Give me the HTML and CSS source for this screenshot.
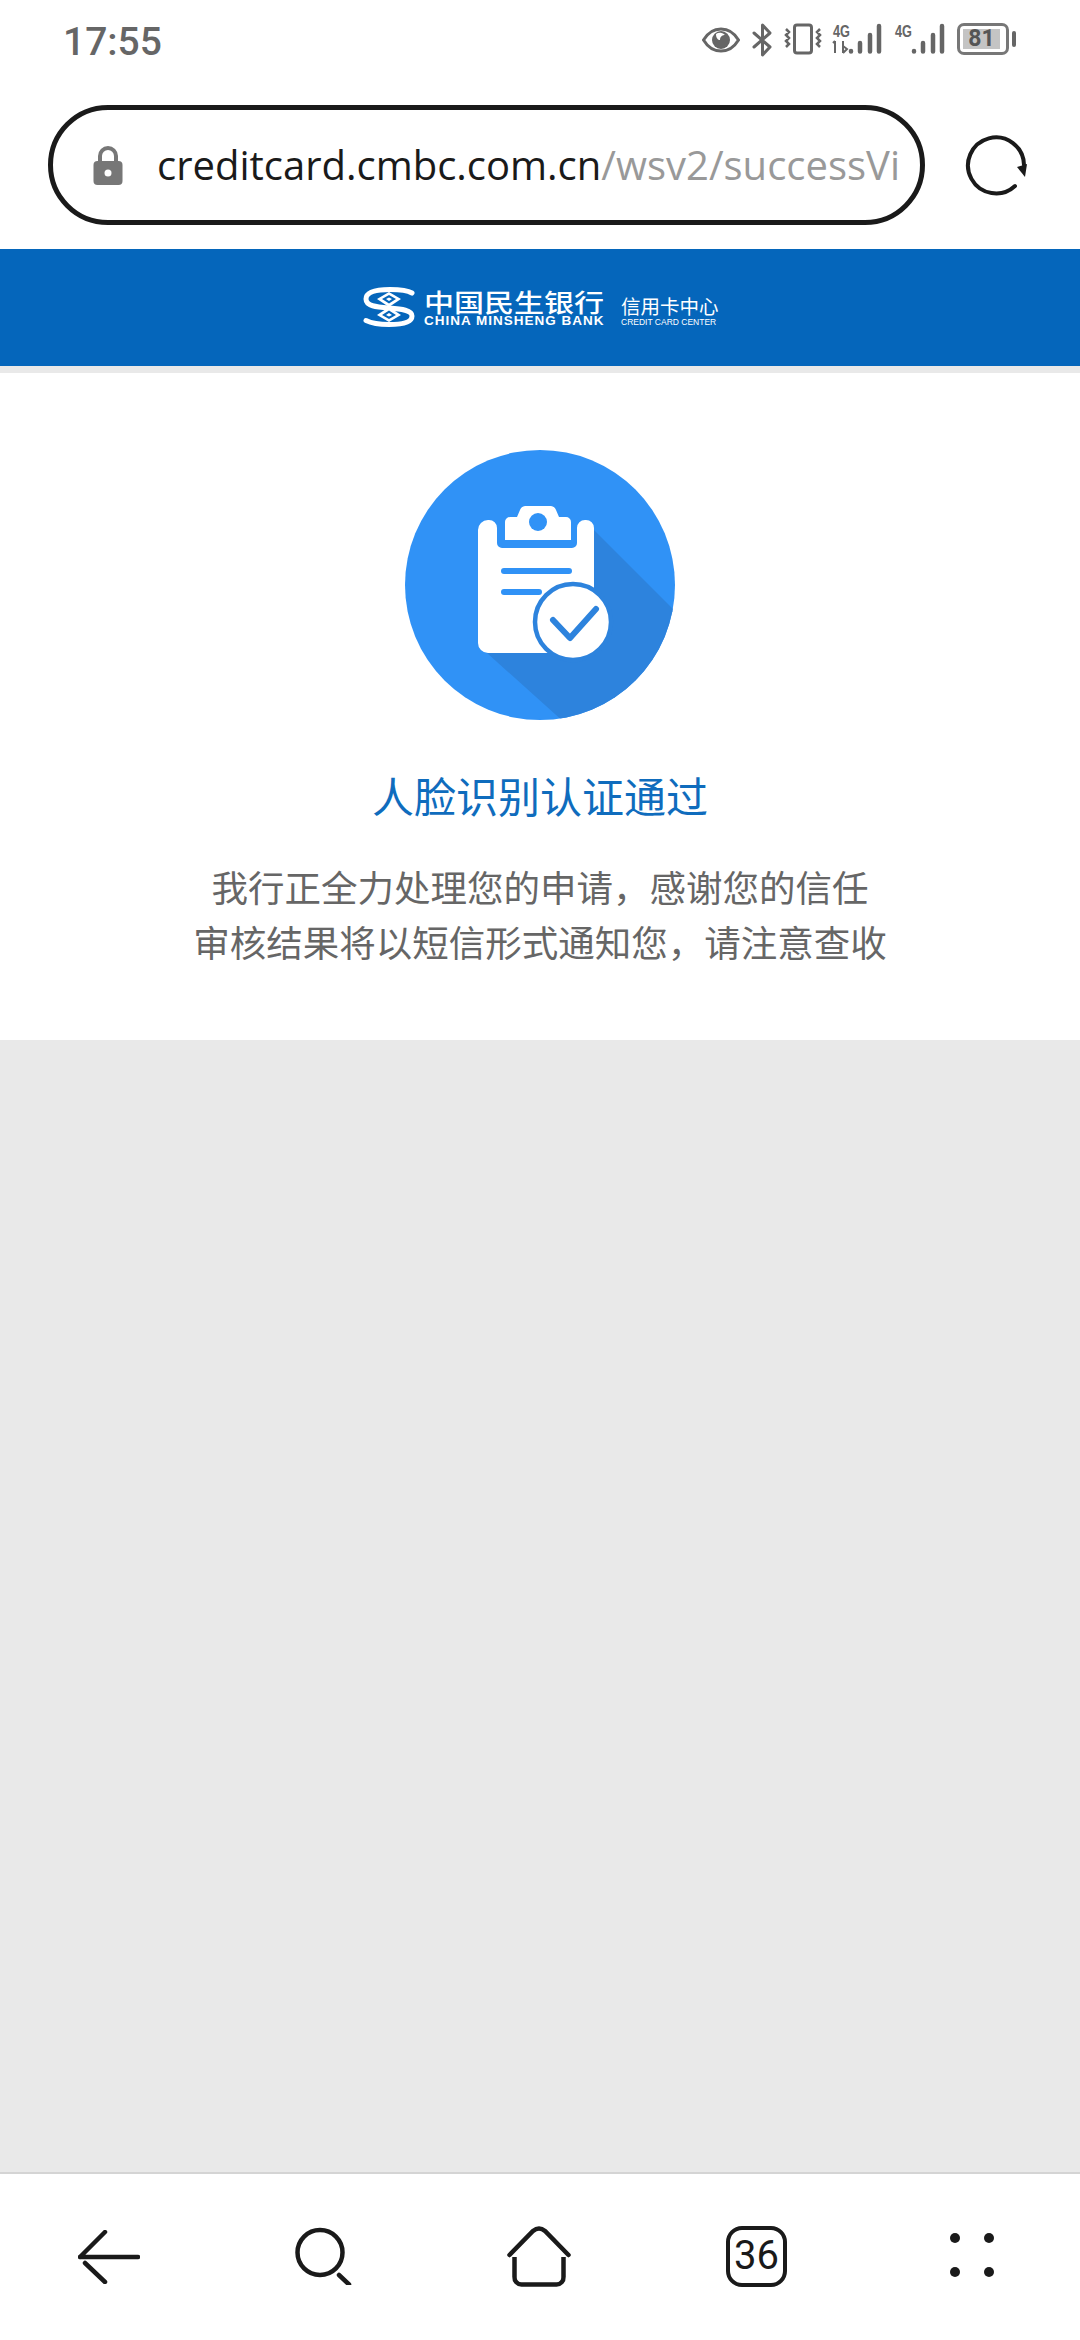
FILE: index.html
```html
<!DOCTYPE html>
<html lang="zh-CN">
  <head>
    <meta charset="UTF-8" />
    <meta name="viewport" content="width=device-width, initial-scale=1.0" />
    <title>人脸识别认证通过</title>
    <link rel="stylesheet" href="styles.css">
  </head>
  <body>
    <div class="phone">
      <div class="statusbar">
        <span class="time">17:55</span>
        <div class="status-icons">
          <!-- eye -->
          <svg class="ic-eye" width="38" height="26" viewBox="0 0 38 26">
            <path d="M1.5 13C6 5.5 12 2 19 2s13 3.5 17.5 11C32 20.5 26 24 19 24S6 20.5 1.5 13z" fill="none" stroke="#666" stroke-width="3"/>
            <circle cx="19" cy="13" r="9" fill="#666"/>
            <path d="M14 7a7 7 0 0 1 9 1c-2 0-5 1-5 5-2 0-4-2-4-6z" fill="#fff"/>
          </svg>
          <!-- bluetooth -->
          <svg class="ic-bt" width="20" height="34" viewBox="0 0 20 34">
            <path d="M2 10l16 14-7.5 8V2L18 10 2 24" fill="none" stroke="#666" stroke-width="3" stroke-linejoin="round" stroke-linecap="round"/>
          </svg>
          <!-- vibrate -->
          <svg class="ic-vib" width="38" height="32" viewBox="0 0 38 32">
            <rect x="10.5" y="2" width="17" height="28" rx="2.5" fill="none" stroke="#666" stroke-width="3"/>
            <path d="M2 6l3 3-3 3 3 3-3 3 3 3-3 3M36 6l-3 3 3 3-3 3 3 3-3 3 3 3" fill="none" stroke="#666" stroke-width="2.5"/>
          </svg>
          <!-- sim 1 -->
          <svg class="ic-sig1" width="50" height="32" viewBox="0 0 50 32">
            <text class="sig-text" x="1" y="14" textLength="17" lengthAdjust="spacingAndGlyphs">4G</text>
            <path d="M3 18v12M1 20l2-2M11 18v12M11 30l4-4-4-3" fill="none" stroke="#666" stroke-width="2"/>
            <path d="M19 28v.5M28 20v8.5M38 12v16.5M47 3v25.5" fill="none" stroke="#666" stroke-width="4.5" stroke-linecap="round"/>
          </svg>
          <!-- sim 2 -->
          <svg class="ic-sig2" width="51" height="32" viewBox="0 0 51 32">
            <text class="sig-text" x="1" y="14" textLength="17" lengthAdjust="spacingAndGlyphs">4G</text>
            <path d="M20 28v.5M29 20v8.5M39 12v16.5M48 3v25.5" fill="none" stroke="#666" stroke-width="4.5" stroke-linecap="round"/>
          </svg>
          <div class="battery">
            <div class="battery-body"><span class="battery-level">81</span></div>
            <div class="battery-nub"></div>
          </div>
        </div>
      </div>

      <div class="addressbar">
        <div class="urlbox">
          <svg class="lock" width="30" height="40" viewBox="0 0 30 40">
            <path d="M7 18v-8a8 8 0 0 1 16 0v8" fill="none" stroke="#777" stroke-width="4"/>
            <rect x="0.5" y="15" width="29" height="24" rx="4" fill="#777"/>
            <circle cx="15" cy="27" r="3.5" fill="#fff"/>
          </svg>
          <div class="url"><span class="url-host">creditcard.cmbc.com.cn</span><span class="url-path">/wsv2/successVi</span></div>
        </div>
        <svg class="reload" width="64" height="64" viewBox="0 0 64 64">
          <path d="M51 53A28 28 0 1 1 60 32" fill="none" stroke="#1a1a1a" stroke-width="4" stroke-linecap="round"/>
          <path d="M53 34l10-3-2 13z" fill="#1a1a1a"/>
        </svg>
      </div>

      <div class="bank-header">
        <svg class="bank-mark" width="52" height="40" viewBox="0 0 52 40">
          <path d="M49 6C44 3 36 2.5 27 2.5 11 2.5 3 6 3 12c0 7 10 8 23 9 13 1 23 2 23 8 0 6-8 8.5-23 8.5-9 0-17-1-23-4" fill="none" stroke="#fff" stroke-width="5" stroke-linecap="round"/>
          <path d="M26 5l12 7-12 8-12-8zM26 20l12 8-12 7-12-7z" fill="#fff"/>
          <path d="M26 8l7 4-7 4.5-7-4.5zM26 23.5l7 4.5-7 4-7-4z" fill="#0566bb"/>
          <path d="M26 10.5l3 1.5-3 2-3-2zM26 26l3 2-3 1.5-3-1.5z" fill="#fff"/>
        </svg>
        <div class="bank-name">
          <div class="bank-cn">中国民生银行</div>
          <div class="bank-en">CHINA MINSHENG BANK</div>
        </div>
        <div class="card-name">
          <div class="card-cn">信用卡中心</div>
          <div class="card-en">CREDIT CARD CENTER</div>
        </div>
      </div>

      <div class="header-gap"></div>

      <div class="result">
        <svg class="result-icon" width="270" height="270" viewBox="0 0 270 270">
          <defs>
            <clipPath id="disc"><circle cx="135" cy="135" r="135"/></clipPath>
          </defs>
          <circle cx="135" cy="135" r="135" fill="#3092f6"/>
          <path d="M189 80L300 191V300H190L82 203z" fill="#2d83dd" clip-path="url(#disc)"/>
          <!-- board -->
          <path d="M73 80a10 10 0 0 1 10-10h1a8 8 0 0 1 8 8v15a5 5 0 0 0 5 5h70a5 5 0 0 0 5-5V78a8 8 0 0 1 8-8h1a8 8 0 0 1 8 8v125H83a10 10 0 0 1-10-10z" fill="#fff"/>
          <path d="M100 72a5 5 0 0 1 5-5h7l3-7a6 6 0 0 1 5-4h26a6 6 0 0 1 5 4l3 7h7a5 5 0 0 1 5 5v18H100z" fill="#fff"/>
          <circle cx="133" cy="72" r="9" fill="#3092f6"/>
          <rect x="96" y="118" width="71" height="6" rx="3" fill="#3092f6"/>
          <rect x="96" y="139" width="41" height="6" rx="3" fill="#3092f6"/>
          <!-- check badge -->
          <circle cx="168" cy="172" r="38" fill="#fff" stroke="#2d83dd" stroke-width="4.5"/>
          <path d="M148 170l17 18 26-29" fill="none" stroke="#2d83dd" stroke-width="6" stroke-linecap="round" stroke-linejoin="round"/>
        </svg>
        <h1 class="result-title">人脸识别认证通过</h1>
        <p class="result-text">我行正全力处理您的申请，感谢您的信任</p>
        <p class="result-text">审核结果将以短信形式通知您，请注意查收</p>
      </div>

      <div class="filler"></div>

      <div class="navbar">
        <svg class="nav-back" width="62" height="54" viewBox="0 0 62 54">
          <path d="M2 27h58M2 27L27 2M7 33l20 19" fill="none" stroke="#1a1a1a" stroke-width="4.5" stroke-linecap="round"/>
        </svg>
        <svg class="nav-search" width="57" height="58" viewBox="0 0 57 58">
          <circle cx="25" cy="25.5" r="22.5" fill="none" stroke="#1a1a1a" stroke-width="4.5"/>
          <path d="M44 48l10 9.5" fill="none" stroke="#1a1a1a" stroke-width="4.5" stroke-linecap="round"/>
        </svg>
        <svg class="nav-home" width="64" height="61" viewBox="0 0 64 61">
          <path d="M2.5 29L26 5q6-5 12 0l23.5 24" fill="none" stroke="#1a1a1a" stroke-width="4.5" stroke-linecap="round"/>
          <path d="M7.5 31v20a7 7 0 0 0 7 7.5h35a7 7 0 0 0 7-7.5V31" fill="none" stroke="#1a1a1a" stroke-width="4.5"/>
        </svg>
        <div class="nav-tabs">36</div>
        <div class="nav-more"><i></i><i></i><i></i><i></i></div>
      </div>
    </div>
  </body>
</html>
```

FILE: styles.css
```css
* {
  box-sizing: border-box;
}

html,
body {
  margin: 0;
  padding: 0;
}

body {
  font-family: "Noto Sans CJK SC", "Noto Sans", sans-serif;
  background: #ffffff;
}

svg {
  display: block;
  flex: none;
}

.phone {
  width: 1080px;
  height: 2340px;
  display: flex;
  flex-direction: column;
  overflow: hidden;
}

/* status bar */
.statusbar {
  height: 105px;
  padding: 17px 64px 0 63px;
  display: flex;
  justify-content: space-between;
  align-items: flex-start;
}
.time {
  font-family: Roboto, sans-serif;
  font-size: 39px;
  line-height: 50px;
  font-weight: 500;
  color: #666666;
}
.status-icons {
  display: flex;
  align-items: flex-start;
  padding-top: 6px;
}
.ic-eye {
  margin-top: 4px;
}
.ic-bt {
  margin: 0 12px;
}
.ic-sig1 {
  margin-left: 10px;
}
.ic-sig2 {
  margin-left: 12px;
}
.sig-text {
  font-family: "Liberation Sans", sans-serif;
  font-size: 17px;
  font-weight: bold;
  fill: #666666;
}
.battery {
  margin-left: 12px;
  display: flex;
  align-items: center;
  gap: 3px;
}
.battery-body {
  width: 52px;
  height: 32px;
  border: 3px solid #777777;
  border-radius: 7px;
  padding: 3px;
}
.battery-level {
  display: block;
  width: 37px;
  height: 20px;
  background: #c4c4c4;
  font-family: Roboto, sans-serif;
  font-size: 23px;
  line-height: 20px;
  font-weight: 700;
  color: #555555;
  text-align: center;
}
.battery-nub {
  width: 4px;
  height: 16px;
  background: #666666;
  border-radius: 2px;
}

/* address bar */
.addressbar {
  height: 144px;
  padding-left: 48px;
  display: flex;
  align-items: flex-start;
  gap: 39px;
}
.urlbox {
  width: 877px;
  height: 120px;
  border: 5px solid #1a1a1a;
  border-radius: 60px;
  padding: 0 20px 0 40px;
  display: flex;
  align-items: center;
  gap: 34px;
}
.lock {
  margin-top: 2px;
}
.url {
  flex: 1;
  overflow: hidden;
  white-space: nowrap;
  font-family: "Open Sans", sans-serif;
  font-size: 40px;
  line-height: 54px;
}
.url-host {
  color: #1a1a1a;
}
.url-path {
  color: #999999;
}
.reload {
  margin-top: 28px;
}

/* bank header */
.bank-header {
  height: 117px;
  background: #0566bb;
  color: #ffffff;
  padding: 38px 0 0 363px;
  display: flex;
  align-items: flex-start;
}
.bank-name {
  margin-left: 9px;
  margin-top: 1px;
  width: 197px;
}
.bank-cn {
  font-size: 30px;
  line-height: 26px;
  font-weight: 500;
  transform: scaleY(0.82);
}
.bank-en {
  font-family: "Liberation Sans", sans-serif;
  font-size: 13.5px;
  line-height: 14px;
  font-weight: bold;
  white-space: nowrap;
  letter-spacing: 1px;
}
.card-name {
  margin-top: 8px;
}
.card-cn {
  font-size: 19.5px;
  line-height: 22px;
}
.card-en {
  font-family: "Liberation Sans", sans-serif;
  font-size: 8.5px;
  line-height: 10px;
  white-space: nowrap;
}
.header-gap {
  height: 7px;
  background: #e9e9e9;
}

/* result card */
.result {
  height: 667px;
  background: #ffffff;
  padding-top: 77px;
  display: flex;
  flex-direction: column;
  align-items: center;
}
.result-icon {
  margin-bottom: 47px;
}
.result-title {
  margin: 0 0 36px;
  font-size: 42px;
  line-height: 56px;
  font-weight: 400;
  color: #0f6cbd;
}
.result-text {
  margin: 0;
  font-size: 36.5px;
  line-height: 55px;
  color: #666666;
}

.filler {
  flex: 1;
  background: #e9e9e9;
}

/* bottom nav */
.navbar {
  height: 168px;
  border-top: 2px solid #d4d4d4;
  background: #ffffff;
  padding: 52px 0 0 78px;
  display: flex;
  gap: 155px;
  align-items: flex-start;
}
.nav-back {
  margin-top: 4px;
}
.nav-search {
  margin-top: 1px;
}
.nav-tabs {
  width: 61px;
  height: 61px;
  border: 4.5px solid #1a1a1a;
  border-radius: 16px;
  font-family: Roboto, sans-serif;
  font-size: 40px;
  line-height: 52px;
  color: #1a1a1a;
  text-align: center;
}
.nav-more {
  width: 44px;
  margin: 7px 0 0 8px;
  display: grid;
  grid-template-columns: 10px 10px;
  justify-content: space-between;
  row-gap: 24px;
}
.nav-more i {
  display: block;
  width: 10px;
  height: 10px;
  border-radius: 50%;
  background: #1a1a1a;
}
```
